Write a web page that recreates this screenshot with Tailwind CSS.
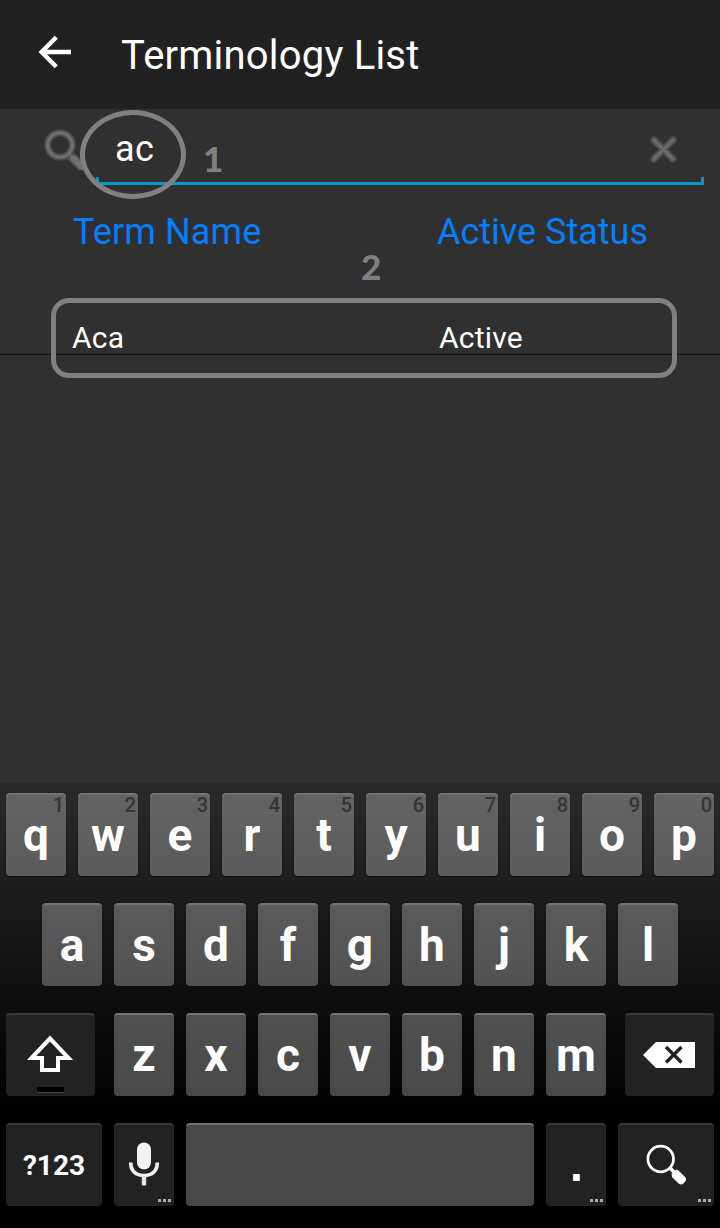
<!DOCTYPE html>
<html lang="en">
<head>
<meta charset="utf-8">
<title>Terminology List</title>
<script src="https://cdn.jsdelivr.net/npm/@tailwindcss/browser@4"></script>
</head>
<body class="w-[720px] h-[1228px] overflow-hidden bg-[#303030] text-white font-['Roboto',sans-serif]">
<div class="relative flex flex-col w-[720px] h-[1228px]">
  <header class="h-[109px] shrink-0 bg-[#212121] flex items-start">
    <svg class="ml-[38px] mt-[35px] w-[34px] h-[34px]" viewBox="0 0 34 34" fill="none" stroke="#fff" stroke-width="4.400"><path d="M33 17H4M18.3 2.3L3.6 17l14.7 14.7"/></svg>
    <h1 class="ml-[49px] mt-[36px] text-[40px] leading-[40px] tracking-[0.2px] whitespace-nowrap">Terminology List</h1>
  </header>

  <section class="h-[91px] shrink-0 flex items-start">
    <svg class="ml-[43px] mt-[18px] w-[43px] h-[44px] shrink-0" viewBox="0 0 43 44" fill="none">
      <circle cx="17" cy="18" r="12.300" stroke="#48484a" stroke-width="7"/>
      <circle cx="17" cy="18" r="12.300" stroke="#58585c" stroke-width="5"/>
      <circle cx="17" cy="18" r="12.300" stroke="#707075" stroke-width="2.500"/>
      <path d="M27 28l13 13" stroke="#4c4c4f" stroke-width="10"/>
      <path d="M26.500 27.500l4 4" stroke="#606065" stroke-width="4"/>
      <path d="M31 32l8 8" stroke="#6f6f74" stroke-width="6.500" stroke-linecap="round"/>
    </svg>
    <div class="ml-[10px] w-[608px] h-[76px] flex flex-col">
      <div class="flex h-[68px] items-start">
        <span class="ml-[19px] mt-[22px] text-[36px] leading-[36px] tracking-[0.5px]">ac</span>
        <svg class="ml-auto mr-[26px] mt-[26px] w-[29px] h-[29px]" viewBox="0 0 29 29" stroke-linecap="round"><path d="M5 5l19 19M24 5L5 24" stroke="#484848" stroke-width="7.500"/><path d="M5 5l19 19M24 5L5 24" stroke="#5a5a5a" stroke-width="5"/><path d="M5 5l19 19M24 5L5 24" stroke="#6e6e6e" stroke-width="2"/></svg>
      </div>
      <div class="h-[8px] border-x-3 border-b-3 border-[#0099cc]"></div>
    </div>
  </section>

  <section class="h-[155px] shrink-0 border-b border-[#141414] flex flex-col">
    <div class="flex h-[120px] items-start text-[36px] leading-[36px] text-[#0080ff] whitespace-nowrap">
      <span class="ml-[73px] mt-[14px] w-[364px] tracking-[0.1px]">Term Name</span>
      <span class="mt-[14px]">Active Status</span>
    </div>
    <div class="flex text-[30px] leading-[30px] tracking-[0.2px]">
      <span class="ml-[72px] mt-[3px] w-[367px]">Aca</span>
      <span class="mt-[3px]">Active</span>
    </div>
  </section>

  <div class="grow"></div>

  <section id="keyboard" class="h-[445px] shrink-0 bg-[linear-gradient(to_bottom,#292929,#000000_75%)] pt-[10px] flex flex-col gap-[27px] font-bold"></section>

  <div class="absolute left-[80px] top-[110px] w-[106px] h-[89px] rounded-[50%] border-5 border-[#808080]"></div>
  <div class="absolute left-[51px] top-[298px] w-[626px] h-[80px] rounded-[18px] border-5 border-[#808080]"></div>
  <span class="absolute left-[203px] top-[140px] text-[35px] leading-[36px] font-black text-[#7f7f7f] font-['Lato',sans-serif]">1</span>
  <span class="absolute left-[361px] top-[248px] text-[35px] leading-[36px] font-black text-[#7f7f7f] font-['Lato',sans-serif]">2</span>
</div>
<script>
const light = ['bg-[linear-gradient(#636363,#5b5b5b)]', 'bg-[linear-gradient(#5b5b5b,#515151)]', 'bg-[linear-gradient(#515151,#484848)]', 'bg-[#474747]'];
const base = 'relative h-[83px] rounded-[4px] border-t-2 flex justify-center shrink-0 shadow-[0_1px_1px_rgba(0,0,0,0.5)] ';
const key = (inner, row, w = 'w-[60px]') => `<div class="${base} border-[#737373] ${light[row]} ${w}">${inner}</div>`;
const dark = (inner, w) => `<div class="${base} border-[#383838] bg-[#222222] ${w}">${inner}</div>`;
const letter = c => `<span class="text-[46px] leading-[81px]">${c}</span>`;
const hint = n => `<span class="absolute right-[2px] top-0 text-[20px] leading-[20px] font-medium text-[#353535]">${n}</span>`;
const dots = '<div class="absolute right-[3px] bottom-[4px] flex gap-[2px]"><i class="w-[3px] h-[3px] bg-[#aaaaaa]"></i><i class="w-[3px] h-[3px] bg-[#aaaaaa]"></i><i class="w-[3px] h-[3px] bg-[#aaaaaa]"></i></div>';
const shift = `<svg class="w-[89px] h-[81px]" viewBox="0 2 89 81"><path d="M44 25.500L25.500 45H36V57H52V45H62.500Z" fill="none" stroke="#fff" stroke-width="4"/><rect x="31" y="74" width="27" height="5" fill="#000"/><rect x="31" y="79" width="27" height="1" fill="#444"/></svg>`;
const del = `<svg class="w-[89px] h-[81px]" viewBox="0 2 89 81"><path d="M18 42L31 29H70V55H31Z" fill="#fff"/><path d="M41 34L56.500 49.500M56.500 34L41 49.500" stroke="#222" stroke-width="3.300"/></svg>`;
const mic = `<svg class="w-[60px] h-[81px]" viewBox="0 2 60 81"><rect x="23" y="19.500" width="14" height="27" rx="7" fill="#f3f3f3"/><path d="M16.700 39.500C16.700 48 22 52.500 30 52.500S43.300 48 43.300 39.500" fill="none" stroke="#eee" stroke-width="3.700"/><path d="M30 53v9.500" stroke="#e5e5e5" stroke-width="4.400"/></svg>`;
const find = `<svg class="w-[96px] h-[81px]" viewBox="0 2 96 81"><circle cx="42.700" cy="36" r="12.800" fill="none" stroke="#fff" stroke-width="2.700"/><path d="M51.500 44.500l5 5" stroke="#fff" stroke-width="3.500"/><path d="M54 50.500L58.500 47L60.500 48L67 54.500Q68.500 57 66 59.500Q63.500 62 61 60.500L54.500 54Z" fill="#fff" stroke="#fff" stroke-width="1" stroke-linejoin="round"/></svg>`;
const row = (cls, html) => `<div class="flex gap-[12px] ${cls}">${html}</div>`;
document.getElementById('keyboard').innerHTML =
  row('pl-[6px]', [...'qwertyuiop'].map((c, i) => key(letter(c) + hint((i + 1) % 10), 0)).join('')) +
  row('pl-[42px]', [...'asdfghjkl'].map(c => key(letter(c), 1)).join('')) +
  `<div class="flex gap-[19px] pl-[6px]">${dark(shift, 'w-[89px]')}${row('', [...'zxcvbnm'].map(c => key(letter(c), 2)).join(''))}${dark(del, 'w-[89px]')}</div>` +
  row('pl-[6px]', dark('<span class="text-[28px] leading-[82px]">?123</span>', 'w-[96px]') + dark(mic + dots, 'w-[60px]') + key('', 3, 'w-[348px]') + dark(`<span class="pl-px text-[46px] leading-[80px] font-['Liberation_Sans',sans-serif]">.</span>` + dots, 'w-[60px]') + dark(find + dots, 'w-[96px]'));
</script>
</body>
</html>
